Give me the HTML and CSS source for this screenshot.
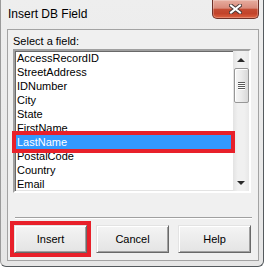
FILE: index.html
```html
<!DOCTYPE html>
<html>
<head>
<meta charset="utf-8">
<link rel="stylesheet" href="styles.css">
</head>
<body>
<div class="window">
  <div class="titlebar">
    <div class="title">Insert DB Field</div>
    <div class="close">
      <svg width="13" height="10" viewBox="0 0 13 10">
        <path d="M2 1.5 L11 8.5 M11 1.5 L2 8.5" stroke="#4a3a38" stroke-width="4" stroke-linecap="square" fill="none"/>
        <path d="M2 1.5 L11 8.5 M11 1.5 L2 8.5" stroke="#ffffff" stroke-width="2" stroke-linecap="square" fill="none"/>
      </svg>
    </div>
  </div>
  <div class="client">
    <div class="label">Select a field:</div>
    <div class="listbox">
      <div class="items">
        <div class="item">AccessRecordID</div>
        <div class="item">StreetAddress</div>
        <div class="item">IDNumber</div>
        <div class="item">City</div>
        <div class="item">State</div>
        <div class="item">FirstName</div>
        <div class="item selected">LastName<span class="mark mark-row"></span></div>
        <div class="item">PostalCode</div>
        <div class="item">Country</div>
        <div class="item">Email</div>
      </div>
      <div class="scrollbar">
        <div class="arrow"><span class="tri-up"></span></div>
        <div class="thumb"><span class="grip"></span><span class="grip"></span><span class="grip"></span><span class="grip"></span></div>
        <div class="track"></div>
        <div class="arrow"><span class="tri-down"></span></div>
      </div>
    </div>
    <div class="separator"></div>
    <div class="buttons">
      <div class="btn">Insert<span class="mark mark-btn"></span></div>
      <div class="btn">Cancel</div>
      <div class="btn">Help</div>
    </div>
  </div>
</div>
</body>
</html>
```
FILE: styles.css
```css
html, body {
  margin: 0;
  padding: 0;
  background: #ffffff;
}
body {
  font-family: "Liberation Sans", Arial, sans-serif;
  font-size: 11px;
  color: #000;
}
.window {
  width: 262px;
  height: 266px;
  background: linear-gradient(180deg, #eeeeee 0%, #e6e6e6 100%);
  border-left: 1px solid #9a9a9a;
  border-right: 1px solid #555a5e;
  border-bottom: 1px solid #555a5e;
  border-bottom-right-radius: 6px;
  border-bottom-left-radius: 6px;
  display: flex;
  flex-direction: column;
}
.titlebar {
  height: 29px;
  display: flex;
  justify-content: space-between;
  align-items: flex-start;
}
.title {
  font-size: 12px;
  line-height: 14px;
  padding-top: 7px;
  padding-left: 7px;
  color: #000;
}
.close {
  width: 45px;
  height: 18px;
  margin-right: 4px;
  border: 1px solid #6e3128;
  border-top: none;
  border-radius: 0 0 5px 5px;
  background: linear-gradient(180deg, #e7ad9f 0%, #d98b7b 45%, #c44c33 52%, #c2432a 75%, #de6240 100%);
  box-shadow: inset 0 0 0 1px rgba(255,255,255,0.25);
  display: flex;
  align-items: center;
  justify-content: center;
}
.close svg {
  display: block;
  margin-top: 0px;
}
.client {
  margin: 0 4px 5px 6px;
  height: 230px;
  border: 1px solid #a3a3a3;
  background: #f0f0f0;
  padding: 5px 0 0 0;
  box-sizing: content-box;
  height: 225px;
  display: flex;
  flex-direction: column;
}
.label {
  line-height: 13px;
  padding-left: 5px;
  margin-bottom: 1px;
}
.listbox {
  position: relative;
  margin-left: 5px;
  width: 234px;
  height: 140px;
  border: 2px solid;
  border-color: #a0a0a0 #ffffff #ffffff #a0a0a0;
  box-shadow: inset 1px 1px 0 #696969, inset -1px -1px 0 #e3e3e3;
  background: #fff;
  display: flex;
}
.items {
  flex: 1;
  padding-top: 0;
}
.item {
  position: relative;
  height: 14px;
  line-height: 14px;
  padding-left: 2px;
  white-space: nowrap;
}
.item.selected {
  background: #3399ff;
  color: #fff;
}
.mark {
  position: absolute;
  border: 4px solid #e8202a;
  z-index: 2;
}
.mark-row {
  left: -3px;
  right: -2px;
  top: -4px;
  bottom: -4px;
}
.scrollbar {
  width: 16px;
  display: flex;
  flex-direction: column;
  background: linear-gradient(90deg, #e3e3e3 0%, #f0f0f0 30%, #f0f0f0 70%, #e8e8e8 100%);
}
.arrow {
  height: 17px;
  display: flex;
  align-items: center;
  justify-content: center;
}
.tri-up {
  width: 0;
  height: 0;
  border-left: 4px solid transparent;
  border-right: 4px solid transparent;
  border-bottom: 4px solid #2a2a2a;
}
.tri-down {
  width: 0;
  height: 0;
  border-left: 4px solid transparent;
  border-right: 4px solid transparent;
  border-top: 4px solid #2a2a2a;
}
.thumb {
  height: 33px;
  margin: 0 0 0 1px;
  width: 13px;
  border: 1px solid #979797;
  border-radius: 2px;
  background: linear-gradient(90deg, #f6f6f6 0%, #eaeaea 50%, #d8d8d8 100%);
  box-shadow: inset 1px 1px 0 #ffffff;
  display: flex;
  flex-direction: column;
  align-items: center;
  justify-content: center;
  gap: 1px;
}
.grip {
  width: 7px;
  height: 1px;
  background: #5a5a5a;
  box-shadow: 0 1px 0 #ffffff;
}
.track {
  flex: 1;
}
.separator {
  margin: 24px 0 0 7px;
  width: 237px;
  height: 1px;
  border-top: 1px solid #a0a0a0;
  border-bottom: 1px solid #ffffff;
  height: 0;
}
.buttons {
  margin: 6px 0 0 6px;
  display: flex;
  gap: 9px;
}
.btn {
  position: relative;
  width: 71px;
  height: 26px;
  border: 1px solid;
  border-color: #e3e3e3 #696969 #696969 #e3e3e3;
  box-shadow: inset 1px 1px 0 #ffffff, inset -1px -1px 0 #a0a0a0;
  background: linear-gradient(180deg, #f4f4f4 0%, #ececec 50%, #e4e4e4 100%);
  display: flex;
  align-items: center;
  justify-content: center;
  line-height: 13px;
}
.mark-btn {
  left: -5px;
  top: -5px;
  right: -5px;
  bottom: -5px;
}
```
